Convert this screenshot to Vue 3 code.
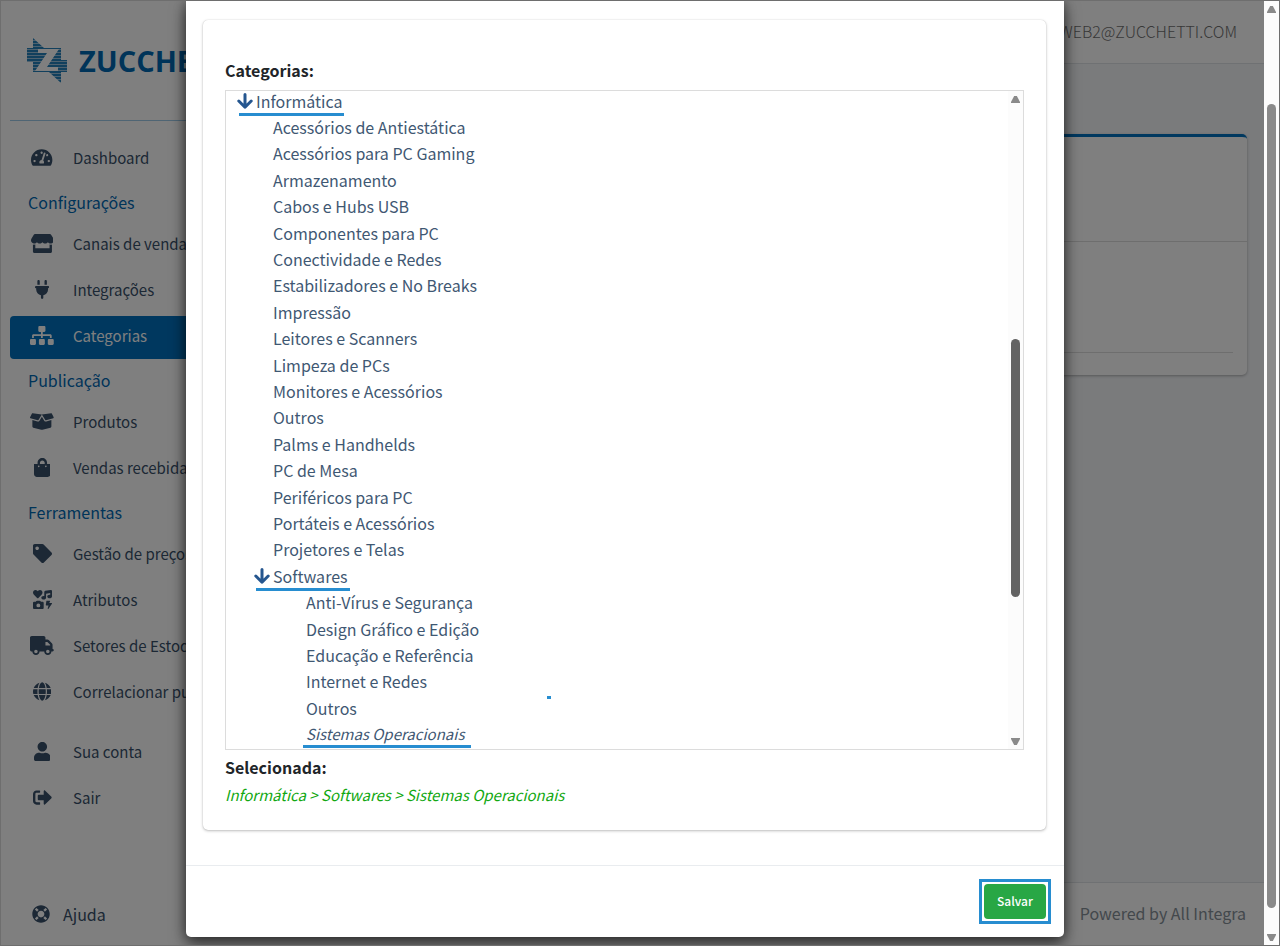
<script setup>
const icons = {
  dashboard: { w: 576, d: 'M288 32C128.94 32 0 160.94 0 320c0 52.8 14.25 102.26 39.06 144.8 5.61 9.62 16.3 15.2 27.44 15.2h443c11.14 0 21.83-5.58 27.44-15.2C561.75 422.26 576 372.8 576 320c0-159.06-128.94-288-288-288zm0 64c14.71 0 26.58 10.13 30.32 23.65-1.11 2.26-2.64 4.23-3.45 6.67l-9.22 27.67c-5.13 3.49-10.97 6.01-17.64 6.01-17.67 0-32-14.33-32-32S270.33 96 288 96zM96 384c-17.67 0-32-14.33-32-32s14.33-32 32-32 32 14.33 32 32-14.33 32-32 32zm48-160c-17.67 0-32-14.33-32-32s14.33-32 32-32 32 14.33 32 32-14.33 32-32 32zm246.77-72.41l-61.33 184C343.13 347.33 352 364.54 352 384c0 11.72-3.38 22.55-8.88 32H232.88c-5.5-9.45-8.88-20.28-8.88-32 0-33.94 26.5-61.43 59.9-63.59l61.34-184.01c4.17-12.56 17.73-19.45 30.36-15.17 12.57 4.19 19.35 17.79 15.17 30.36zm14.66 57.2l15.52-46.55c3.47-1.29 7.13-2.23 11.05-2.23 17.67 0 32 14.33 32 32s-14.33 32-32 32c-11.38-.01-20.89-6.28-26.57-15.22zM480 384c-17.67 0-32-14.33-32-32s14.33-32 32-32 32 14.33 32 32-14.33 32-32 32z' },
  store: { w: 616, d: 'M602 118.6L537.1 15C531.3 5.7 521 0 510 0H106C95 0 84.7 5.7 78.9 15L14 118.6c-33.5 53.5-3.8 127.9 58.8 136.4 4.5.6 9.1.9 13.7.9 29.6 0 55.8-13 73.8-33.1 18 20.1 44.3 33.1 73.8 33.1 29.6 0 55.8-13 73.8-33.1 18 20.1 44.3 33.1 73.8 33.1 29.6 0 55.8-13 73.8-33.1 18.1 20.1 44.3 33.1 73.8 33.1 4.7 0 9.2-.3 13.7-.9 62.8-8.4 92.6-82.8 59-136.4zM529.5 288c-10 0-19.9-1.5-29.5-3.8V384H116v-99.8c-9.6 2.2-19.5 3.8-29.5 3.8-6 0-12.1-.4-18-1.2-5.6-.8-11.1-2.1-16.4-3.6V480c0 17.7 14.3 32 32 32h448c17.7 0 32-14.3 32-32V283.2c-5.4 1.6-10.8 2.9-16.4 3.6-6.1.8-12.1 1.2-18.2 1.2z' },
  plug: { w: 384, d: 'M96 0C78.3 0 64 14.3 64 32v96h64V32c0-17.7-14.3-32-32-32zM288 0c-17.7 0-32 14.3-32 32v96h64V32c0-17.7-14.3-32-32-32zM32 160c-17.7 0-32 14.3-32 32s14.3 32 32 32v32c0 77.4 55 142 128 156.8V480c0 17.7 14.3 32 32 32s32-14.3 32-32V412.8C297 398 352 333.4 352 256V224c17.7 0 32-14.3 32-32s-14.3-32-32-32H32z' },
  sitemap: { w: 640, d: 'M128 352H32c-17.67 0-32 14.33-32 32v96c0 17.67 14.33 32 32 32h96c17.67 0 32-14.33 32-32v-96c0-17.67-14.33-32-32-32zm-24-80h192v48h48v-48h192v48h48v-57.59c0-21.17-17.23-38.41-38.41-38.41H344v-64h40c17.67 0 32-14.33 32-32V32c0-17.67-14.33-32-32-32H256c-17.67 0-32 14.33-32 32v96c0 17.67 14.33 32 32 32h40v64H94.41C73.23 224 56 241.23 56 262.41V320h48v-48zm264 80h-96c-17.67 0-32 14.33-32 32v96c0 17.67 14.33 32 32 32h96c17.67 0 32-14.33 32-32v-96c0-17.67-14.33-32-32-32zm240 0h-96c-17.67 0-32 14.33-32 32v96c0 17.67 14.33 32 32 32h96c17.67 0 32-14.33 32-32v-96c0-17.67-14.33-32-32-32z' },
  box: { w: 640, d: 'M425.7 256c-16.9 0-32.8-9-41.4-23.4L320 126l-64.2 106.6c-8.7 14.5-24.6 23.5-41.5 23.5-4.5 0-9-.6-13.3-1.9L64 215v178c0 14.7 10 27.5 24.2 31l216.2 54.1c10.2 2.5 20.9 2.5 31 0L551.8 424c14.2-3.6 24.2-16.4 24.2-31V215l-137 39.1c-4.3 1.3-8.8 1.9-13.3 1.9zm212.6-112.2L586.8 41c-3.1-6.2-9.8-9.8-16.7-8.9L320 64l91.7 152.1c3.8 6.3 11.4 9.3 18.5 7.3l197.9-56.5c9.9-2.9 14.7-13.9 10.2-23.1zM53.2 41L1.7 143.8c-4.6 9.2.3 20.2 10.1 23l197.9 56.5c7.1 2 14.7-1 18.5-7.3L320 64 69.8 32.1c-6.9-.8-13.5 2.7-16.6 8.9z' },
  bag: { w: 448, d: 'M352 160v-32C352 57.42 294.579 0 224 0 153.42 0 96 57.42 96 128v32H0v272c0 44.183 35.817 80 80 80h288c44.183 0 80-35.817 80-80V160h-96zm-192-32c0-35.29 28.71-64 64-64s64 28.71 64 64v32H160v-32zm160 120c-13.255 0-24-10.745-24-24s10.745-24 24-24 24 10.745 24 24-10.745 24-24 24zm-192 0c-13.255 0-24-10.745-24-24s10.745-24 24-24 24 10.745 24 24-10.745 24-24 24z' },
  tag: { w: 512, d: 'M0 252.118V48C0 21.49 21.49 0 48 0h204.118a48 48 0 0 1 33.941 14.059l211.882 211.882c18.745 18.745 18.745 49.137 0 67.882L293.823 497.941c-18.745 18.745-49.137 18.745-67.882 0L14.059 286.059A48 48 0 0 1 0 252.118zM112 64c-26.51 0-48 21.49-48 48s21.49 48 48 48 48-21.49 48-48-21.49-48-48-48z' },
  icons: { w: 512, d: 'M116.65 219.35a15.68 15.68 0 0 0 22.65 0l96.75-99.83c28.15-29 26.5-77.1-4.91-103.88C203.75-7.7 163-3.5 137.86 22.44L128 32.58l-9.85-10.14C93.05-3.5 52.25-7.7 24.86 15.64c-31.41 26.78-33 74.85-5 103.88zm143.92 100.49h-48l-7.08-14.24a27.39 27.39 0 0 0-25.66-17.78h-71.71a27.39 27.39 0 0 0-25.66 17.78l-7 14.24h-48A27.45 27.45 0 0 0 0 347.3v137.25A27.44 27.44 0 0 0 27.43 512h233.14A27.45 27.45 0 0 0 288 484.55V347.3a27.45 27.45 0 0 0-27.43-27.46zM144 468a52 52 0 1 1 52-52 52 52 0 0 1-52 52zm355.4-115.9h-60.58l22.36-50.75c2.1-6.65-3.93-13.21-12.18-13.21h-75.59c-6.3 0-11.66 3.9-12.5 9.1l-16.8 106.93c-1 6.3 4.88 11.89 12.5 11.89h62.31l-24.2 83c-1.89 6.65 4.2 12.9 12.23 12.9a13.26 13.26 0 0 0 10.92-5.25l92.4-138.91c4.88-6.91-1.16-15.7-10.87-15.7zM478.08.33L329.51 23.17C314.87 25.42 304 38.92 304 54.83V161.6a83.25 83.25 0 0 0-16-1.7c-35.35 0-64 21.48-64 48s28.65 48 64 48c35.2 0 63.73-21.32 64-47.66V99.66l112-17.22v47.18a83.25 83.25 0 0 0-16-1.7c-35.35 0-64 21.48-64 48s28.65 48 64 48c35.2 0 63.73-21.32 64-47.66V32c0-19.48-16-34.42-33.92-31.67z' },
  truck: { w: 640, d: 'M48 0C21.5 0 0 21.5 0 48V368c0 26.5 21.5 48 48 48H64c0 53 43 96 96 96s96-43 96-96H384c0 53 43 96 96 96s96-43 96-96h32c17.7 0 32-14.3 32-32s-14.3-32-32-32V288 256 237.3c0-17-6.7-33.3-18.7-45.3L512 114.7c-12-12-28.3-18.7-45.3-18.7H416V48c0-26.5-21.5-48-48-48H48zM416 160h50.7L544 237.3V256H416V160zM112 416a48 48 0 1 1 96 0 48 48 0 1 1 -96 0zm368-48a48 48 0 1 1 0 96 48 48 0 1 1 0-96z' },
  globe: { w: 496, d: 'M336.5 160C322 70.7 287.8 8 248 8s-74 62.7-88.5 152h177zM152 256c0 22.2 1.2 43.5 3.3 64h185.3c2.1-20.5 3.3-41.8 3.3-64s-1.2-43.5-3.3-64H155.3c-2.1 20.5-3.3 41.8-3.3 64zm324.7-96c-28.6-67.9-86.5-120.4-158-141.6 24.4 33.8 41.2 84.7 50 141.6h108zM177.2 18.4C105.8 39.6 47.8 92.1 19.3 160h108c8.7-56.9 25.5-107.8 49.9-141.6zM487.4 192H372.7c2.1 21 3.3 42.5 3.3 64s-1.2 43-3.3 64h114.6c5.5-20.5 8.6-41.8 8.6-64s-3.1-43.5-8.5-64zM120 256c0-21.5 1.2-43 3.3-64H8.6C3.2 212.5 0 233.8 0 256s3.2 43.5 8.6 64h114.6c-2-21-3.2-42.5-3.2-64zm39.5 96c14.5 89.3 48.7 152 88.5 152s74-62.7 88.5-152h-177zm159.3 141.6c71.4-21.2 129.4-73.7 158-141.6h-108c-8.8 56.9-25.6 107.8-50 141.6zM19.3 352c28.6 67.9 86.5 120.4 158 141.6-24.4-33.8-41.2-84.7-50-141.6h-108z' },
  user: { w: 448, d: 'M224 256c70.7 0 128-57.3 128-128S294.7 0 224 0 96 57.3 96 128s57.3 128 128 128zm89.6 32h-16.7c-22.2 10.2-46.9 16-72.9 16s-50.6-5.8-72.9-16h-16.7C60.2 288 0 348.2 0 422.4V464c0 26.5 21.5 48 48 48h352c26.5 0 48-21.5 48-48v-41.6c0-74.2-60.2-134.4-134.4-134.4z' },
  exit: { w: 512, d: 'M497 273L329 441c-15 15-41 4.5-41-17v-96H152c-13.3 0-24-10.7-24-24v-96c0-13.3 10.7-24 24-24h136V88c0-21.4 25.9-32 41-17l168 168c9.3 9.4 9.3 24.6 0 34zM192 436v-40c0-6.6-5.4-12-12-12H96c-17.7 0-32-14.3-32-32V160c0-17.7 14.3-32 32-32h84c6.6 0 12-5.4 12-12V76c0-6.6-5.4-12-12-12H96c-53 0-96 43-96 96v192c0 53 43 96 96 96h84c6.6 0 12-5.4 12-12z' },
  ring: { w: 512, d: 'M256 8C119.033 8 8 119.033 8 256s111.033 248 248 248 248-111.033 248-248S392.967 8 256 8zm173.696 119.559l-63.399 63.399c-10.987-18.559-26.67-34.252-45.255-45.255l63.399-63.399a218.396 218.396 0 0 1 45.255 45.255zM256 352c-53.019 0-96-42.981-96-96s42.981-96 96-96 96 42.981 96 96-42.981 96-96 96zM127.559 82.304l63.399 63.399c-18.559 10.987-34.252 26.67-45.255 45.255l-63.399-63.399a218.372 218.372 0 0 1 45.255-45.255zM82.304 384.441l63.399-63.399c10.987 18.559 26.67 34.252 45.255 45.255l-63.399 63.399a218.396 218.396 0 0 1-45.255-45.255zm302.137 45.255l-63.399-63.399c18.559-10.987 34.252-26.67 45.255-45.255l63.399 63.399a218.403 218.403 0 0 1-45.255 45.255z' }
}

const menu = [
  { icon: 'dashboard', text: 'Dashboard' },
  { head: true, text: 'Configurações' },
  { icon: 'store', text: 'Canais de venda' },
  { icon: 'plug', text: 'Integrações' },
  { icon: 'sitemap', text: 'Categorias', active: true },
  { head: true, text: 'Publicação' },
  { icon: 'box', text: 'Produtos' },
  { icon: 'bag', text: 'Vendas recebida' },
  { head: true, text: 'Ferramentas' },
  { icon: 'tag', text: 'Gestão de preços' },
  { icon: 'icons', text: 'Atributos' },
  { icon: 'truck', text: 'Setores de Estoq' },
  { icon: 'globe', text: 'Correlacionar pu' },
  { icon: 'user', text: 'Sua conta', spaced: true },
  { icon: 'exit', text: 'Sair' }
]

const tree = [
  { level: 1, text: 'Informática', open: true },
  ...['Acessórios de Antiestática', 'Acessórios para PC Gaming', 'Armazenamento', 'Cabos e Hubs USB',
    'Componentes para PC', 'Conectividade e Redes', 'Estabilizadores e No Breaks', 'Impressão',
    'Leitores e Scanners', 'Limpeza de PCs', 'Monitores e Acessórios', 'Outros', 'Palms e Handhelds',
    'PC de Mesa', 'Periféricos para PC', 'Portáteis e Acessórios', 'Projetores e Telas'
  ].map(text => ({ level: 2, text })),
  { level: 2, text: 'Softwares', open: true },
  ...['Anti-Vírus e Segurança', 'Design Gráfico e Edição', 'Educação e Referência', 'Internet e Redes', 'Outros']
    .map(text => ({ level: 3, text })),
  { level: 3, text: 'Sistemas Operacionais', picked: true }
]
</script>

<template>
  <div class="screen">
    <div class="viewport">
      <aside class="sidebar">
        <a class="brand" href="#">
          <svg class="mark" viewBox="0 0 40 46" aria-hidden="true">
            <defs>
              <pattern id="stripes" width="3" height="3" patternUnits="userSpaceOnUse">
                <rect width="3" height="3" fill="#9cc3dc" />
                <rect width="3" height="2" fill="#2580bb" />
              </pattern>
            </defs>
            <path d="M6 0L17 10H34V22H40V34H34V45L22 34H6V24H0V10H6Z" fill="url(#stripes)" />
            <path d="M11 11H32L20 29H31V33H8L20 15H11Z" fill="#fff" />
          </svg>
          <span class="wordmark">ZUCCHE</span>
        </a>
        <nav class="menu">
          <template v-for="item in menu" :key="item.text">
            <h2 v-if="item.head" class="menu-head">{{ item.text }}</h2>
            <a v-else href="#" class="menu-item" :class="{ active: item.active, spaced: item.spaced }">
              <span class="menu-icon">
                <svg :viewBox="`0 0 ${icons[item.icon].w} 512`"><path :d="icons[item.icon].d" /></svg>
              </span>
              <span>{{ item.text }}</span>
            </a>
          </template>
        </nav>
        <a class="help" href="#">
          <svg viewBox="0 0 512 512"><path :d="icons.ring.d" /></svg>
          <span>Ajuda</span>
        </a>
      </aside>

      <div class="content">
        <header class="topbar">WEB2@ZUCCHETTI.COM</header>
        <main class="main">
          <section class="panel">
            <div class="panel-head"></div>
            <div class="panel-body"></div>
          </section>
        </main>
        <footer class="footer">Powered by All Integra</footer>
      </div>

      <div class="backdrop">
        <div class="modal" role="dialog" aria-label="Categorias">
          <div class="modal-body">
            <section class="card">
              <h3 class="label">Categorias:</h3>
              <div class="tree-box">
                <ul class="tree">
                  <li v-for="(node, i) in tree" :key="i" :class="['level-' + node.level, { open: node.open, picked: node.picked }]">
                    <button type="button" class="node">
                      <svg v-if="node.open" class="arrow" viewBox="0 0 16 16" aria-hidden="true"><path d="M8 1.5V14M1.8 8L8 14.2L14.2 8" /></svg>
                      <span>{{ node.text }}</span>
                    </button>
                  </li>
                </ul>
                <i class="speck"></i>
                <div class="scroll inner">
                  <i class="up"></i>
                  <i class="thumb"></i>
                  <i class="down"></i>
                </div>
              </div>
              <h3 class="label chosen-label">Selecionada:</h3>
              <p class="chosen">Informática &gt; Softwares &gt; Sistemas Operacionais</p>
            </section>
          </div>
          <div class="modal-foot">
            <div class="save-frame">
              <button type="button" class="save">Salvar</button>
            </div>
          </div>
        </div>
      </div>
    </div>
    <div class="scroll outer">
      <i class="up"></i>
      <i class="thumb"></i>
      <i class="down"></i>
    </div>
  </div>
</template>

<style>
body {
  margin: 0;
}
</style>

<style scoped>
* {
  box-sizing: border-box;
}

.screen {
  display: flex;
  height: 100vh;
  border: 1px solid #6e6e6e;
  font-family: "Noto Sans CJK SC", "Noto Sans", sans-serif;
  font-size: 16px;
  line-height: 26px;
  color: #212529;
}

.viewport {
  position: relative;
  display: flex;
  flex: 1;
  min-width: 0;
  overflow: hidden;
}

a {
  color: inherit;
  text-decoration: none;
}

.sidebar {
  display: flex;
  flex-direction: column;
  flex: none;
  width: 250px;
  padding: 0 9px;
  background: #fff;
  color: #38506a;
  white-space: nowrap;
}

.brand {
  display: flex;
  align-items: center;
  flex: none;
  gap: 12px;
  height: 120px;
  padding-left: 17px;
  border-bottom: 1px solid #9fcbe8;
}

.mark {
  flex: none;
  width: 40px;
  height: 46px;
}

.wordmark {
  font-family: "Open Sans", sans-serif;
  font-size: 29px;
  font-weight: 700;
  color: #0068b3;
}

.menu {
  display: flex;
  flex-direction: column;
  gap: 3px;
  padding-top: 17px;
}

.menu-head {
  height: 37px;
  margin: 0;
  padding-left: 18px;
  font-size: 16px;
  font-weight: 400;
  line-height: 36px;
  color: #0068b3;
}

.menu-item {
  display: flex;
  align-items: center;
  gap: 19px;
  height: 43px;
  padding: 0 0 4px 20px;
  border-radius: 4px;
  font-size: 15px;
}

.menu-item.active {
  background: #0070bf;
  color: #fff;
}

.menu-item.spaced {
  margin-top: 14px;
}

.menu-icon {
  display: flex;
  justify-content: center;
  flex: none;
  width: 24px;
}

svg {
  display: block;
  fill: currentColor;
}

.menu-icon svg {
  height: 19px;
}

.help {
  display: flex;
  align-items: center;
  gap: 13px;
  margin-top: auto;
  padding: 0 0 18px 22px;
}

.help svg {
  width: 18px;
  height: 18px;
}

.content {
  display: flex;
  flex-direction: column;
  flex: 1;
  min-width: 0;
  background: #f4f6f9;
}

.topbar {
  display: flex;
  align-items: center;
  justify-content: flex-end;
  height: 63px;
  padding: 0 27px 2px 0;
  border-bottom: 1px solid #dee2e6;
  background: #fff;
  font-weight: 300;
  color: #707070;
}

.main {
  flex: 1;
  padding: 70px 17px 0 16px;
}

.panel {
  border-top: 3px solid #0070bf;
  border-radius: 5px;
  background: #fff;
  box-shadow: 0 1px 3px rgba(0, 0, 0, .3);
}

.panel-head {
  height: 105px;
  border-bottom: 1px solid #dcdcdc;
}

.panel-body {
  height: 133px;
  padding: 110px 14px 0;
}

.panel-body::before {
  content: "";
  display: block;
  border-top: 1px solid #dcdcdc;
}

.footer {
  height: 63px;
  padding: 17px 18px 0;
  border-top: 1px solid #dee2e6;
  background: #fff;
  text-align: right;
  color: #869099;
}

.backdrop {
  position: absolute;
  inset: 0;
  padding: 0 200px 8px 185px;
  background: rgba(0, 0, 0, .5);
}

.modal {
  display: flex;
  flex-direction: column;
  height: 100%;
  border-radius: 0 0 5px 5px;
  background: #fff;
  box-shadow: 0 8px 16px rgba(0, 0, 0, .5), 0 0 12px rgba(0, 0, 0, .4);
}

.modal-body {
  flex: 1;
  padding: 19px 18px 34px 17px;
}

.card {
  padding: 37px 22px 22px;
  border-radius: 5px;
  background: #fff;
  box-shadow: 0 0 1px rgba(0, 0, 0, .2), 0 1px 3px rgba(0, 0, 0, .25);
}

.label {
  margin: 0;
  padding-bottom: 7px;
  font-size: 16px;
  font-weight: 700;
}

.chosen-label {
  padding-bottom: 2px;
}

.tree-box {
  position: relative;
  display: flex;
  align-items: flex-end;
  height: 660px;
  margin-bottom: 4px;
  border: 1px solid #dcdcdc;
  overflow: hidden;
}

.tree {
  display: grid;
  grid-auto-rows: 1fr;
  flex: 1;
  height: 660px;
  margin: 0;
  padding: 0;
  list-style: none;
}

.tree li {
  display: flex;
  align-items: center;
  padding-bottom: 3px;
}

.level-1 { padding-left: 11px; }
.level-2 { padding-left: 47px; }
.level-3 { padding-left: 80px; }
.level-2.open { padding-left: 28px; }

.node {
  position: relative;
  display: flex;
  align-items: center;
  gap: 3px;
  padding: 0;
  border: 0;
  background: none;
  font: inherit;
  line-height: 22px;
  color: #3f5873;
}

.picked .node {
  font-size: 15px;
  font-style: italic;
}

.open .node::after,
.picked .node::after {
  content: "";
  position: absolute;
  left: 2px;
  right: -2px;
  bottom: -4px;
  height: 3px;
  background: #278dd0;
}

.picked .node::after {
  left: -3px;
  right: -7px;
  bottom: -3px;
}

.arrow {
  width: 16px;
  height: 16px;
  fill: none;
  stroke: #25568f;
  stroke-width: 3;
  stroke-linecap: round;
  stroke-linejoin: round;
}

.speck {
  position: absolute;
  left: 321px;
  bottom: 50px;
  width: 4px;
  height: 3px;
  background: #278dd0;
}

.scroll {
  display: flex;
  flex-direction: column;
  align-items: center;
  flex: none;
  width: 15px;
  background: #fcfcfc;
}

.scroll .thumb {
  width: 9px;
  border-radius: 5px;
}

.up,
.down {
  width: 9px;
  height: 7px;
  background: #8a8a8a;
  clip-path: polygon(35% 0, 65% 0, 100% 85%, 100% 100%, 0 100%, 0 85%);
}

.down {
  margin-top: auto;
  transform: rotate(180deg);
}

.inner {
  height: 100%;
  padding: 5px 0 4px;
}

.inner .thumb {
  height: 258px;
  margin-top: 236px;
  background: #636363;
}

.outer {
  padding: 5px 0 4px;
}

.outer .thumb {
  height: 86%;
  margin-top: 91px;
  background: #8a8a8a;
}

.chosen {
  margin: 0;
  font-size: 15px;
  font-style: italic;
  color: #12a812;
}

.modal-foot {
  display: flex;
  justify-content: flex-end;
  align-items: flex-start;
  height: 72px;
  padding: 13px 13px 0;
  border-top: 1px solid #e9ecef;
}

.save-frame {
  display: flex;
  padding: 2px;
  border: 3px solid #278dd0;
}

.save {
  width: 62px;
  height: 35px;
  padding: 0 0 1px;
  border: 0;
  border-radius: 4px;
  background: #28a745;
  font: inherit;
  font-size: 12px;
  font-weight: 500;
  color: #fff;
}
</style>
